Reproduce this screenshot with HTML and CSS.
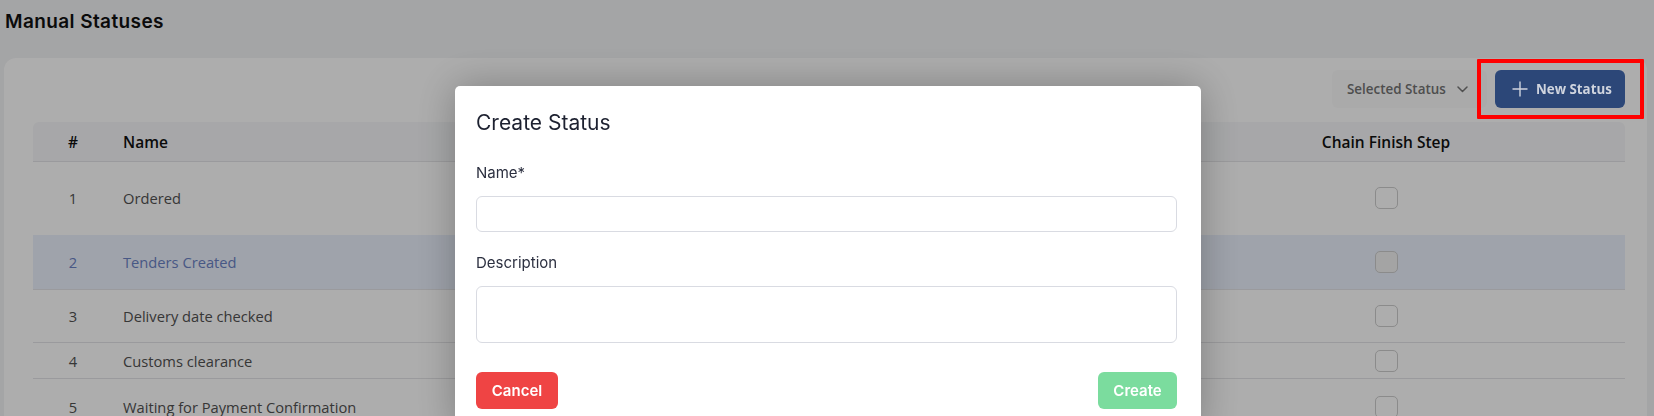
FILE: index.html
```html
<!DOCTYPE html>
<html lang="en">
<head>
<meta charset="utf-8">
<title>Manual Statuses</title>
<link rel="stylesheet" href="styles.css">
</head>
<body>
<main class="page">
  <h1 class="page-title">Manual Statuses</h1>
  <section class="card">
    <div class="toolbar">
      <button class="select-btn" type="button">
        <span>Selected Status</span>
        <svg class="chev" width="11" height="7" viewBox="0 0 11 7"><path d="M1 1l4.5 4.5L10 1" fill="none" stroke="currentColor" stroke-width="1.5" stroke-linecap="round" stroke-linejoin="round"/></svg>
      </button>
      <div class="new-wrap">
        <button class="new-btn" type="button">
          <svg width="16" height="16" viewBox="0 0 16 16"><path d="M8 0.5v15M0.5 8h15" fill="none" stroke="currentColor" stroke-width="1.4"/></svg>
          <span>New Status</span>
        </button>
        <span class="annot"></span>
      </div>
    </div>
    <div class="table">
      <div class="tr th">
        <div class="c num">#</div>
        <div class="c name">Name</div>
        <div class="c chk">Chain Finish Step</div>
        <div class="c act"></div>
      </div>
      <div class="tr r1">
        <div class="c num">1</div>
        <div class="c name">Ordered</div>
        <div class="c chk"><span class="box"></span></div>
        <div class="c act"></div>
      </div>
      <div class="tr r2 selected">
        <div class="c num">2</div>
        <div class="c name">Tenders Created</div>
        <div class="c chk"><span class="box"></span></div>
        <div class="c act"></div>
      </div>
      <div class="tr r3">
        <div class="c num">3</div>
        <div class="c name">Delivery date checked</div>
        <div class="c chk"><span class="box"></span></div>
        <div class="c act"></div>
      </div>
      <div class="tr r4">
        <div class="c num">4</div>
        <div class="c name">Customs clearance</div>
        <div class="c chk"><span class="box"></span></div>
        <div class="c act"></div>
      </div>
      <div class="tr r5">
        <div class="c num">5</div>
        <div class="c name">Waiting for Payment Confirmation</div>
        <div class="c chk"><span class="box"></span></div>
        <div class="c act"></div>
      </div>
    </div>
  </section>
</main>

<div class="overlay"></div>

<div class="modal" role="dialog">
  <h2 class="modal-title">Create Status</h2>
  <label class="field-label" for="st-name">Name*</label>
  <input class="field-input" id="st-name" type="text">
  <label class="field-label desc-label" for="st-desc">Description</label>
  <textarea class="field-area" id="st-desc"></textarea>
  <div class="modal-actions">
    <button class="btn btn-cancel" type="button">Cancel</button>
    <button class="btn btn-create" type="button">Create</button>
  </div>
</div>
</body>
</html>
```

FILE: styles.css
```css
* { box-sizing: border-box; }

html, body {
  margin: 0;
  padding: 0;
  height: 100%;
  overflow: hidden;
}

body {
  background: #f2f3f5;
  font-family: Inter, "Noto Sans", sans-serif;
  color: #111827;
}

.page {
  padding: 10px 7px 0 4px;
}

.page-title {
  margin: 0 0 24px 1px;
  font-size: 19px;
  line-height: 24px;
  font-weight: 600;
  color: #111;
  letter-spacing: 0.4px;
}

.card {
  background: #fff;
  border-radius: 12px;
  padding: 12px 22px 0 29px;
  height: 400px;
}

.toolbar {
  display: flex;
  justify-content: flex-end;
  align-items: center;
  gap: 8px;
  height: 38px;
  margin-bottom: 14px;
}

.select-btn {
  display: flex;
  align-items: center;
  gap: 11px;
  height: 38px;
  width: 155px;
  padding: 0 0 0 15px;
  border: none;
  border-radius: 6px;
  background: #fbfbfb;
  font-family: "Open Sans", sans-serif;
  font-size: 13.4px;
  font-weight: 600;
  color: #737373;
  white-space: nowrap;
}

.chev { color: #777; flex: none; }

.new-wrap {
  position: relative;
  z-index: 20;
}

.new-btn {
  display: flex;
  align-items: center;
  gap: 8px;
  height: 38px;
  width: 130px;
  padding: 0 0 0 17px;
  border: none;
  border-radius: 6px;
  background: #2c4778;
  color: #cfd4de;
  font-family: "Open Sans", sans-serif;
  font-size: 13.3px;
  font-weight: 700;
  white-space: nowrap;
}

.annot {
  position: absolute;
  top: -11px;
  left: -18px;
  right: -19px;
  bottom: -11px;
  border: 4px solid #ff0000;
  border-radius: 1px;
}

.table {
  font-family: "Open Sans", sans-serif;
  font-size: 14.7px;
  color: #515151;
}

.tr {
  display: grid;
  grid-template-columns: 80px 1fr 200px 139px;
  align-items: center;
  border-bottom: 1px solid #e4e4e7;
}

.th {
  height: 40px;
  background: #f6f7f9;
  border-radius: 6px 6px 0 0;
  color: #111;
  font-weight: 600;
  font-size: 15.5px;
}

.c.num { text-align: center; }
.c.name { padding-left: 10px; }
.c.chk {
  display: flex;
  justify-content: center;
  white-space: nowrap;
}

.r1 { height: 73px; border-bottom-color: transparent; }
.r2 { height: 55px; }
.r3 { height: 53px; }
.r4 { height: 36px; }
.r5 { height: 56px; }

.selected {
  background: #eaf0fc;
  color: #6a82c4;
}

.box {
  display: block;
  width: 23px;
  height: 22px;
  border: 1.5px solid #cdcdcd;
  border-radius: 5px;
  background: transparent;
}

.selected .box { background: #f2f2f2; }

.overlay {
  position: fixed;
  inset: 0;
  background: rgba(0, 0, 0, 0.32);
  z-index: 10;
}

.modal {
  position: fixed;
  left: 455px;
  top: 86px;
  width: 746px;
  z-index: 15;
  background: #fff;
  border-radius: 5px;
  padding: 23px 24px 24px 21px;
  display: flex;
  flex-direction: column;
  box-shadow: 0 0 40px rgba(0, 0, 0, 0.28);
}

.modal-title {
  margin: 0 0 25px;
  font-size: 21px;
  line-height: 28px;
  font-weight: 400;
  color: #1d2130;
}

.field-label {
  font-size: 15px;
  line-height: 22px;
  color: #2c3040;
  margin-bottom: 12px;
}

.desc-label { margin-top: 20px; margin-bottom: 12px; }

.field-input,
.field-area {
  display: block;
  width: 100%;
  border: 1px solid #d9dbe2;
  border-radius: 6px;
  background: #fff;
  font-family: Inter, sans-serif;
  font-size: 15px;
}

.field-input { height: 36px; }

.field-area {
  height: 57px;
  resize: none;
}

.modal-actions {
  display: flex;
  justify-content: space-between;
  margin-top: 29px;
}

.btn {
  height: 37px;
  border: none;
  border-radius: 6px;
  color: #fff;
  font-family: Inter, sans-serif;
  font-size: 15px;
  font-weight: 600;
}

.btn-cancel { width: 82px; background: #ef4444; }
.btn-create { width: 79px; background: #7bdc9e; }
```
